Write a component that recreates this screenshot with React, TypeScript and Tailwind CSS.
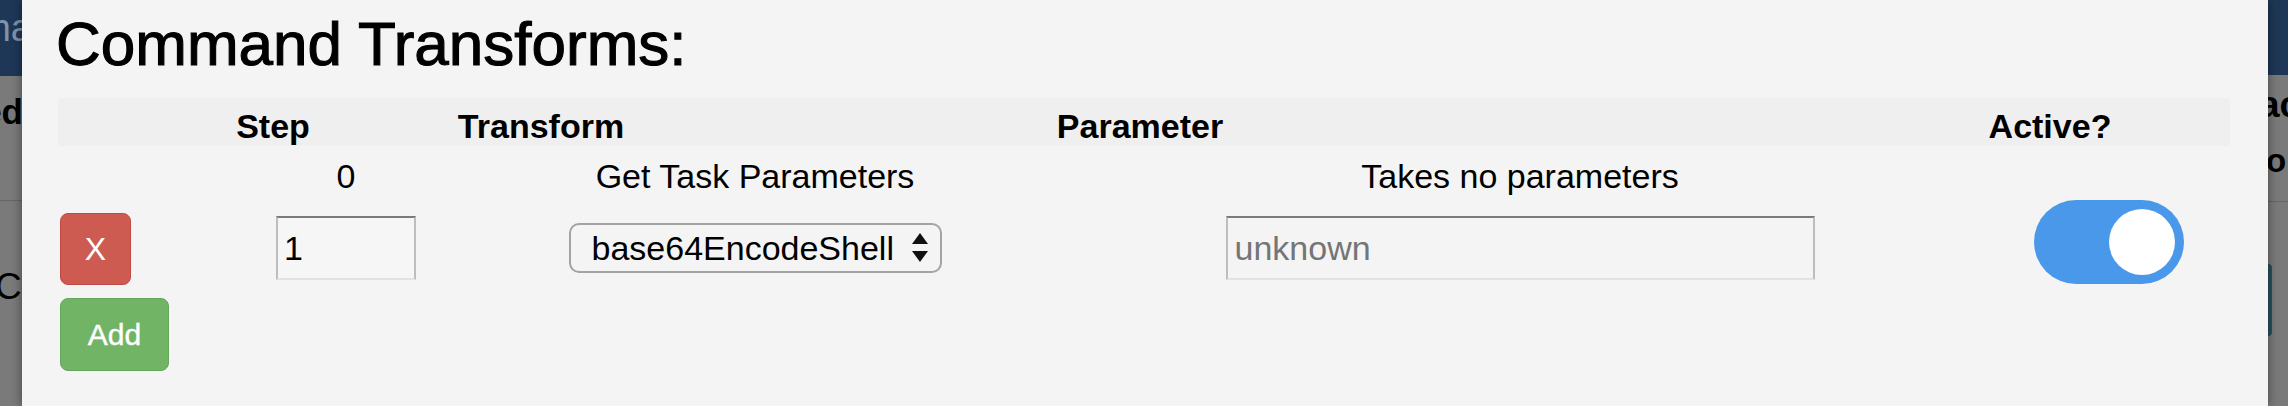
import React from "react";

function LeftBackdrop() {
  return (
    <div className="w-[22px] shrink-0 flex flex-col overflow-hidden bg-[#7a7a7a]">
      <div className="h-[76px] bg-[#1f3756] flex justify-end pt-[6px] overflow-hidden">
        <span className="mr-[-10px] whitespace-nowrap text-[38px] leading-[44px] text-[#8093ab]">ma</span>
      </div>
      <div className="h-[125px] flex justify-end pt-[16px] overflow-hidden border-b border-[#666666]">
        <span className="mr-[-1px] whitespace-nowrap text-[35px] leading-[40px] font-bold text-black">ed</span>
      </div>
      <div className="flex pt-[66px] overflow-hidden">
        <span className="ml-[-5px] whitespace-nowrap text-[37px] leading-[40px] text-black">C</span>
      </div>
    </div>
  );
}

function RightBackdrop() {
  return (
    <div className="w-[20px] shrink-0 flex flex-col overflow-hidden bg-[#7a7a7a]">
      <div className="h-[75px] bg-[#1f3756]" />
      <div className="h-[127px] flex flex-col overflow-hidden border-b border-[#666666]">
        <span className="ml-[-9px] mt-[8px] whitespace-nowrap text-[37px] leading-[44px] font-bold text-black">ac</span>
        <span className="ml-[-2px] mt-[14px] whitespace-nowrap text-[33px] leading-[40px] font-bold text-black">o</span>
      </div>
      <div className="mt-[62px] w-[4px] h-[72px] rounded-r-[4px] bg-[#2a4e5e]" />
    </div>
  );
}

function Toggle() {
  return (
    <div className="w-[150px] h-[84px] rounded-full bg-[#4a98e9] flex items-center justify-end pr-[9px]">
      <div className="w-[66px] h-[66px] rounded-full bg-white" />
    </div>
  );
}

function SelectArrows() {
  return (
    <svg width="18" height="32" viewBox="0 0 18 32" className="block">
      <polygon points="9,1 17,12 1,12" fill="#111" />
      <polygon points="1,19 17,19 9,30" fill="#111" />
    </svg>
  );
}

export default function App() {
  const inset =
    "box-border border-t-2 border-t-[#7a7a7a] border-l-2 border-l-[#bdbdbd] border-r-2 border-r-[#bdbdbd] border-b-2 border-b-[#e2e2e2] outline-none";
  return (
    <div className="flex w-[2288px] h-[406px] overflow-hidden bg-[#7a7a7a] font-['Liberation_Sans',Arial,sans-serif] text-black">
      <LeftBackdrop />
      <div className="relative z-10 flex-1 bg-[#f4f4f4] pl-[36px] pr-[38px] shadow-[0_0_10px_rgba(0,0,0,0.45)]">
        <div className="h-[98px] pt-[10px]">
          <h3 className="ml-[-2px] text-[62px] leading-[68px] font-normal [-webkit-text-stroke:1.1px_black]">
            Command Transforms:
          </h3>
        </div>

        <div className="grid grid-cols-[120px_190px_346px_852px_304px_360px] h-[48px] bg-[#efefef] pt-[8px] text-[34px] leading-[40px] font-bold text-center">
          <div />
          <div>Step</div>
          <div>Transform</div>
          <div>Parameter</div>
          <div />
          <div>Active?</div>
        </div>

        <div className="grid grid-cols-[218px_140px_678px_852px_42px_242px] h-[50px] pt-[10px] text-[34px] leading-[40px] text-center">
          <div />
          <div>0</div>
          <div>Get Task Parameters</div>
          <div>Takes no parameters</div>
          <div />
          <div />
        </div>

        <div className="grid grid-cols-[218px_140px_678px_852px_42px_242px] h-[89px] items-start">
          <div>
            <button className="ml-[2px] mt-[17px] w-[71px] h-[72px] rounded-[8px] bg-[#cd5b52] border border-[#c24a42] text-white text-[32px] leading-[32px] flex items-center justify-center">
              X
            </button>
          </div>
          <div className="pt-[20px]">
            <input
              readOnly
              value="1"
              className={`${inset} w-[140px] h-[64px] bg-[#f6f6f6] pl-[6px] text-[34px] text-black`}
            />
          </div>
          <div className="pt-[27px] flex justify-center">
            <div className="box-border w-[373px] h-[50px] rounded-[10px] border-2 border-[#a3a3a3] bg-[#f4f4f4] flex items-center pl-[21px] pr-[11px]">
              <span className="flex-1 text-[34px] leading-[40px] whitespace-nowrap">base64EncodeShell</span>
              <SelectArrows />
            </div>
          </div>
          <div className="pt-[20px] flex justify-center">
            <input
              readOnly
              placeholder="unknown"
              className={`${inset} w-[589px] h-[64px] bg-[#f4f4f4] pl-[7px] text-[34px] placeholder:text-[#757575]`}
            />
          </div>
          <div />
          <div className="pt-[4px] flex justify-center">
            <Toggle />
          </div>
        </div>

        <button className="ml-[2px] mt-[13px] w-[109px] h-[73px] rounded-[8px] bg-[#71b466] border border-[#63a858] text-white text-[30px] leading-[30px] [-webkit-text-stroke:0.4px_white] flex items-center justify-center">
          Add
        </button>
      </div>
      <RightBackdrop />
    </div>
  );
}
